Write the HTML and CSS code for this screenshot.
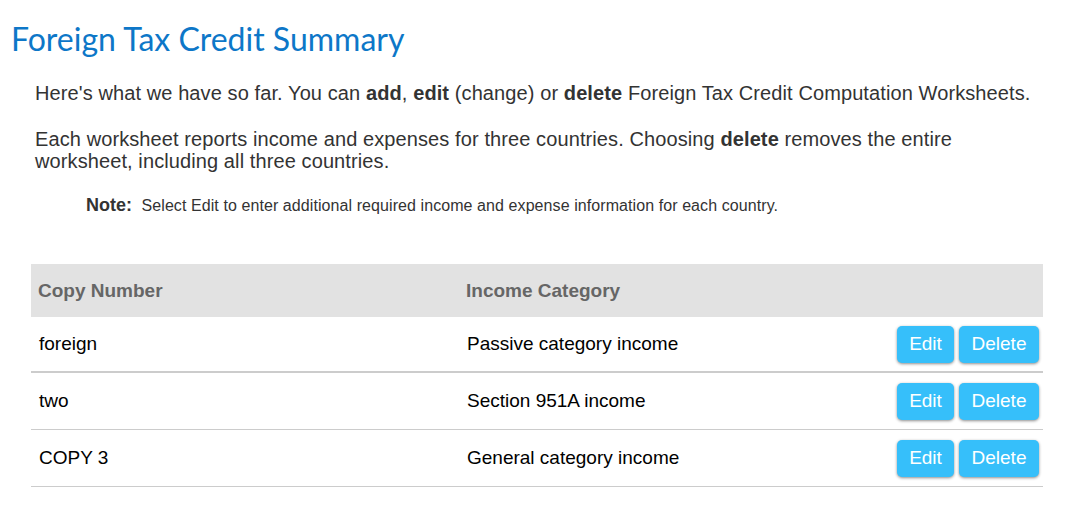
FILE: index.html
```html
<!DOCTYPE html>
<html>
<head>
    <meta charset="utf-8" />
    <title>Foreign Tax Credit Summary</title>
    <link rel="stylesheet" href="styles.css">
</head>
<body>
    <div class="Page">
        <h1 class="Title">Foreign Tax Credit Summary</h1>
        <div class="Intro">
            <p>Here's what we have so far. You can <b>add</b>, <b>edit</b> (change) or <b>delete</b> Foreign Tax Credit Computation Worksheets.</p>
            <p>Each worksheet reports income and expenses for three countries. Choosing <b>delete</b> removes the entire worksheet, including all three countries.</p>
        </div>
        <div class="Note">
            <b>Note:</b> Select Edit to enter additional required income and expense information for each country.
        </div>
        <table class="Summary">
            <thead>
                <tr>
                    <th class="ColCopy">Copy Number</th>
                    <th>Income Category</th>
                    <th></th>
                </tr>
            </thead>
            <tbody>
                <tr>
                    <td>foreign</td>
                    <td>Passive category income</td>
                    <td class="Actions"><button class="Button">Edit</button><button class="Button Delete">Delete</button></td>
                </tr>
                <tr>
                    <td>two</td>
                    <td>Section 951A income</td>
                    <td class="Actions"><button class="Button">Edit</button><button class="Button Delete">Delete</button></td>
                </tr>
                <tr>
                    <td>COPY 3</td>
                    <td>General category income</td>
                    <td class="Actions"><button class="Button">Edit</button><button class="Button Delete">Delete</button></td>
                </tr>
            </tbody>
        </table>
    </div>
</body>
</html>
```

FILE: styles.css
```css
body {
    margin: 0;
    background: #fff;
    font-family: "Liberation Sans", Arial, sans-serif;
    color: #333;
}
.Page {
    padding: 20px 29px 0 11px;
}
.Title {
    margin: 0;
    font-family: Lato, "Open Sans", sans-serif;
    font-weight: normal;
    font-size: 32px;
    line-height: 38px;
    color: #0d77c8;
}
.Intro {
    padding: 0 0 0 24px;
    font-size: 20px;
    line-height: 22px;
    letter-spacing: 0.1px;
}
.Intro p {
    margin: 24px 0 0 0;
}
.Intro p + p {
    margin-top: 24px;
}
.Note {
    margin: 23px 0 0 75px;
    font-size: 16px;
    letter-spacing: 0.08px;
}
.Note b {
    font-size: 18px;
    letter-spacing: 0;
    margin-right: 5px;
}
.Summary {
    margin: 48px 0 0 20px;
    width: 1012px;
    border-collapse: collapse;
}
.Summary th {
    background-color: #e2e2e2;
    height: 53px;
    padding: 0 7px;
    text-align: left;
    font-size: 19px;
    color: #666;
}
.Summary th.ColCopy {
    width: 414px;
}
.Summary td {
    height: 56px;
    padding: 0 8px;
    font-size: 19px;
    color: #000;
    border-bottom: 1px solid #ccc;
}
.Summary tbody tr:first-child td {
    height: 54px;
    border-bottom-width: 2px;
}
.Summary td.Actions {
    padding-right: 4px;
    text-align: right;
    white-space: nowrap;
}
.Button {
    background-color: #36bffa;
    color: #fff;
    border: none;
    border-radius: 5px;
    height: 37px;
    width: 57px;
    font-family: "Liberation Sans", Arial, sans-serif;
    font-size: 19px;
    box-shadow: 0 1px 3px rgba(0, 0, 0, 0.45);
    margin-left: 5px;
    padding: 0;
    vertical-align: middle;
}
.Button.Delete {
    width: 80px;
}
```
